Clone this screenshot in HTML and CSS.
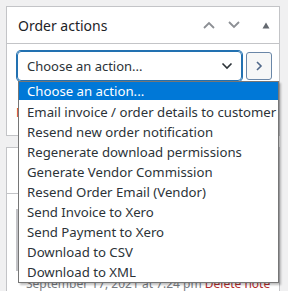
FILE: index.html
```html
<!DOCTYPE html>
<html>
<head>
<meta charset="utf-8">
<link rel="stylesheet" href="styles.css">
</head>
<body>
<div class="page">
  <div class="postbox actions-box">
    <div class="postbox-header">
      <h2 class="postbox-title">Order actions</h2>
      <div class="handles">
        <svg class="h-icon" width="12" height="8" viewBox="0 0 12 8"><path d="M1 7 L6 2 L11 7" fill="none" stroke="#8c8f94" stroke-width="1.8"/></svg>
        <svg class="h-icon" width="12" height="8" viewBox="0 0 12 8"><path d="M1 1 L6 6 L11 1" fill="none" stroke="#8c8f94" stroke-width="1.8"/></svg>
        <svg class="h-tri" width="8" height="7" viewBox="0 0 8 7"><path d="M0.5 6.5 L4 0.5 L7.5 6.5 Z" fill="#646970"/></svg>
      </div>
    </div>
    <div class="inside">
      <div class="action-row">
        <div class="select">
          <span class="select-text">Choose an action...</span>
          <svg class="select-caret" width="12" height="8" viewBox="0 0 12 8"><path d="M1.5 1.5 L6 6 L10.5 1.5" fill="none" stroke="#2c3338" stroke-width="1.6"/></svg>
        </div>
        <button class="go-btn"><svg width="8" height="10" viewBox="0 0 8 10"><path d="M2 1 L6 5 L2 9" fill="none" stroke="#50698a" stroke-width="1.6"/></svg></button>
      </div>
      <div class="sub-row"><span class="red-link">Move to trash</span></div>
    </div>
  </div>
  <div class="postbox notes-box">
    <div class="notes-header"></div>
    <div class="notes-body">
      <div class="note-content"></div>
      <div class="note-meta">September 17, 2021 at 7:24 pm <span class="del">Delete note</span></div>
    </div>
  </div>
  <ul class="dropdown">
    <li class="opt selected">Choose an action...</li>
    <li class="opt">Email invoice / order details to customer</li>
    <li class="opt">Resend new order notification</li>
    <li class="opt">Regenerate download permissions</li>
    <li class="opt">Generate Vendor Commission</li>
    <li class="opt">Resend Order Email (Vendor)</li>
    <li class="opt">Send Invoice to Xero</li>
    <li class="opt">Send Payment to Xero</li>
    <li class="opt">Download to CSV</li>
    <li class="opt">Download to XML</li>
  </ul>
</div>
</body>
</html>
```

FILE: styles.css
```css
html, body {
  margin: 0;
  padding: 0;
  background: #f0f0f1;
  font-family: "Noto Sans", "Open Sans", sans-serif;
  color: #2c3338;
  overflow: hidden;
}
.page {
  position: relative;
  width: 288px;
  height: 291px;
  padding: 6px 8px 0 6px;
  box-sizing: border-box;
  overflow: hidden;
}
.postbox {
  background: #fff;
  border: 1px solid #c3c4c7;
}
.postbox-header {
  height: 36px;
  display: flex;
  align-items: center;
  justify-content: space-between;
  border-bottom: 1px solid #c3c4c7;
  padding: 0 9px 0 11px;
}
.postbox-title {
  margin: 0;
  font-size: 14px;
  font-weight: 400;
  color: #1d2327;
}
.handles {
  display: flex;
  align-items: center;
  gap: 13px;
}
.h-tri {
  margin-left: 9px;
}
.inside {
  padding: 7px 7px 0 10px;
  height: 84px;
}
.action-row {
  display: flex;
  align-items: flex-start;
  gap: 4px;
}
.select {
  width: 226px;
  height: 30px;
  box-sizing: border-box;
  border: 1px solid #2271b1;
  box-shadow: 0 0 0 1px #2271b1;
  border-radius: 4px;
  display: flex;
  align-items: center;
  justify-content: space-between;
  padding: 0 8px 0 9px;
  font-size: 13px;
  color: #2c3338;
}
.go-btn {
  width: 26px;
  height: 28px;
  margin-top: 1px;
  box-sizing: border-box;
  border: 1px solid #6a87a8;
  border-radius: 3px;
  background: #f6f7f7;
  display: flex;
  align-items: center;
  justify-content: center;
  padding: 0;
}
.sub-row {
  margin-top: 22px;
  margin-left: -1px;
  font-size: 13px;
}
.red-link {
  color: #b32d2e;
}
.notes-box {
  margin-top: 11px;
  height: 150px;
}
.notes-header {
  height: 45px;
  border-bottom: 1px solid #c3c4c7;
}
.notes-body {
  padding: 15px 0 0 9px;
}
.note-content {
  height: 62px;
  background: #efefef;
  border-left: 2px solid #c3c4c7;
}
.note-meta {
  margin-top: 5px;
  padding-left: 10px;
  font-size: 12px;
  line-height: 16px;
  color: #787c82;
}
.del {
  color: #b32d2e;
}
.dropdown {
  position: absolute;
  left: 18px;
  top: 81px;
  width: 261px;
  margin: 0;
  padding: 0;
  list-style: none;
  background: #fff;
  border: 1px solid #767676;
  box-sizing: border-box;
  box-shadow: 2px 2px 2px rgba(0,0,0,0.25);
}
.opt {
  height: 20px;
  line-height: 20px;
  padding-left: 8px;
  font-size: 13.2px;
  color: #2c3338;
  white-space: nowrap;
}
.opt.selected {
  background: #0078d7;
  color: #fff;
  height: 18px;
  line-height: 18px;
  margin-bottom: 2px;
}
```
